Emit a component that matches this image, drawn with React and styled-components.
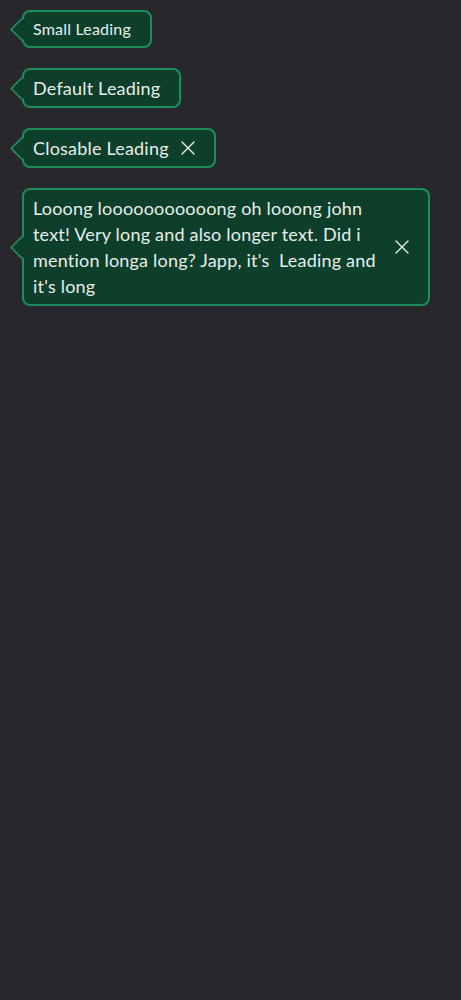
import React from 'react';
import styled, { createGlobalStyle } from 'styled-components';

const GlobalStyle = createGlobalStyle`
  body {
    margin: 0;
    background: #28272c;
    font-family: Lato, "Open Sans", sans-serif;
  }
`;

const Page = styled.div`
  display: flex;
  flex-direction: column;
  align-items: flex-start;
  gap: 20px;
  padding: 10px;
`;

// tag with an arrow pointing left
const Tag = styled.div`
  position: relative;
  display: flex;
  align-items: center;
  gap: 12px;
  margin-left: 12px;
  max-width: 408px;
  box-sizing: border-box;
  padding: ${p => (p.small ? '6px 19px 6px 9px' : '5px 19px 5px 9px')};
  background: #0d3f2b;
  border: 2px solid #1f8c5f;
  border-radius: 8px;
  color: #e7ede9;
  font-size: ${p => (p.small ? '16px' : '18px')};
  letter-spacing: 0.2px;
  line-height: ${p => (p.small ? '22px' : '26px')};

  &::before {
    content: '';
    position: absolute;
    left: -11px;
    top: 50%;
    width: 17px;
    height: 17px;
    margin-top: -8.5px;
    background: #0d3f2b;
    border-left: 2px solid #1f8c5f;
    border-bottom: 2px solid #1f8c5f;
    border-bottom-left-radius: 3px;
    box-sizing: border-box;
    transform: rotate(45deg);
  }
`;

const Label = styled.span`
  position: relative;
`;

const Close = styled.button`
  flex: none;
  display: flex;
  padding: 0;
  border: 0;
  background: none;
  color: #e7ede9;
  cursor: pointer;
`;

const CloseIcon = () => (
  <svg width="14" height="14" viewBox="0 0 14 14" fill="none" stroke="currentColor" strokeWidth="1.4" strokeLinecap="round">
    <path d="M1 1L13 13M13 1L1 13" />
  </svg>
);

export default function App() {
  return (
    <Page>
      <GlobalStyle />
      <Tag small><Label>Small Leading</Label></Tag>
      <Tag><Label>Default Leading</Label></Tag>
      <Tag>
        <Label>Closable Leading</Label>
        <Close><CloseIcon /></Close>
      </Tag>
      <Tag>
        <Label>
          Looong looooooooooong oh looong john text! Very long and also longer text. Did i mention longa long? Japp, it's&nbsp; Leading and it's long
        </Label>
        <Close><CloseIcon /></Close>
      </Tag>
    </Page>
  );
}
